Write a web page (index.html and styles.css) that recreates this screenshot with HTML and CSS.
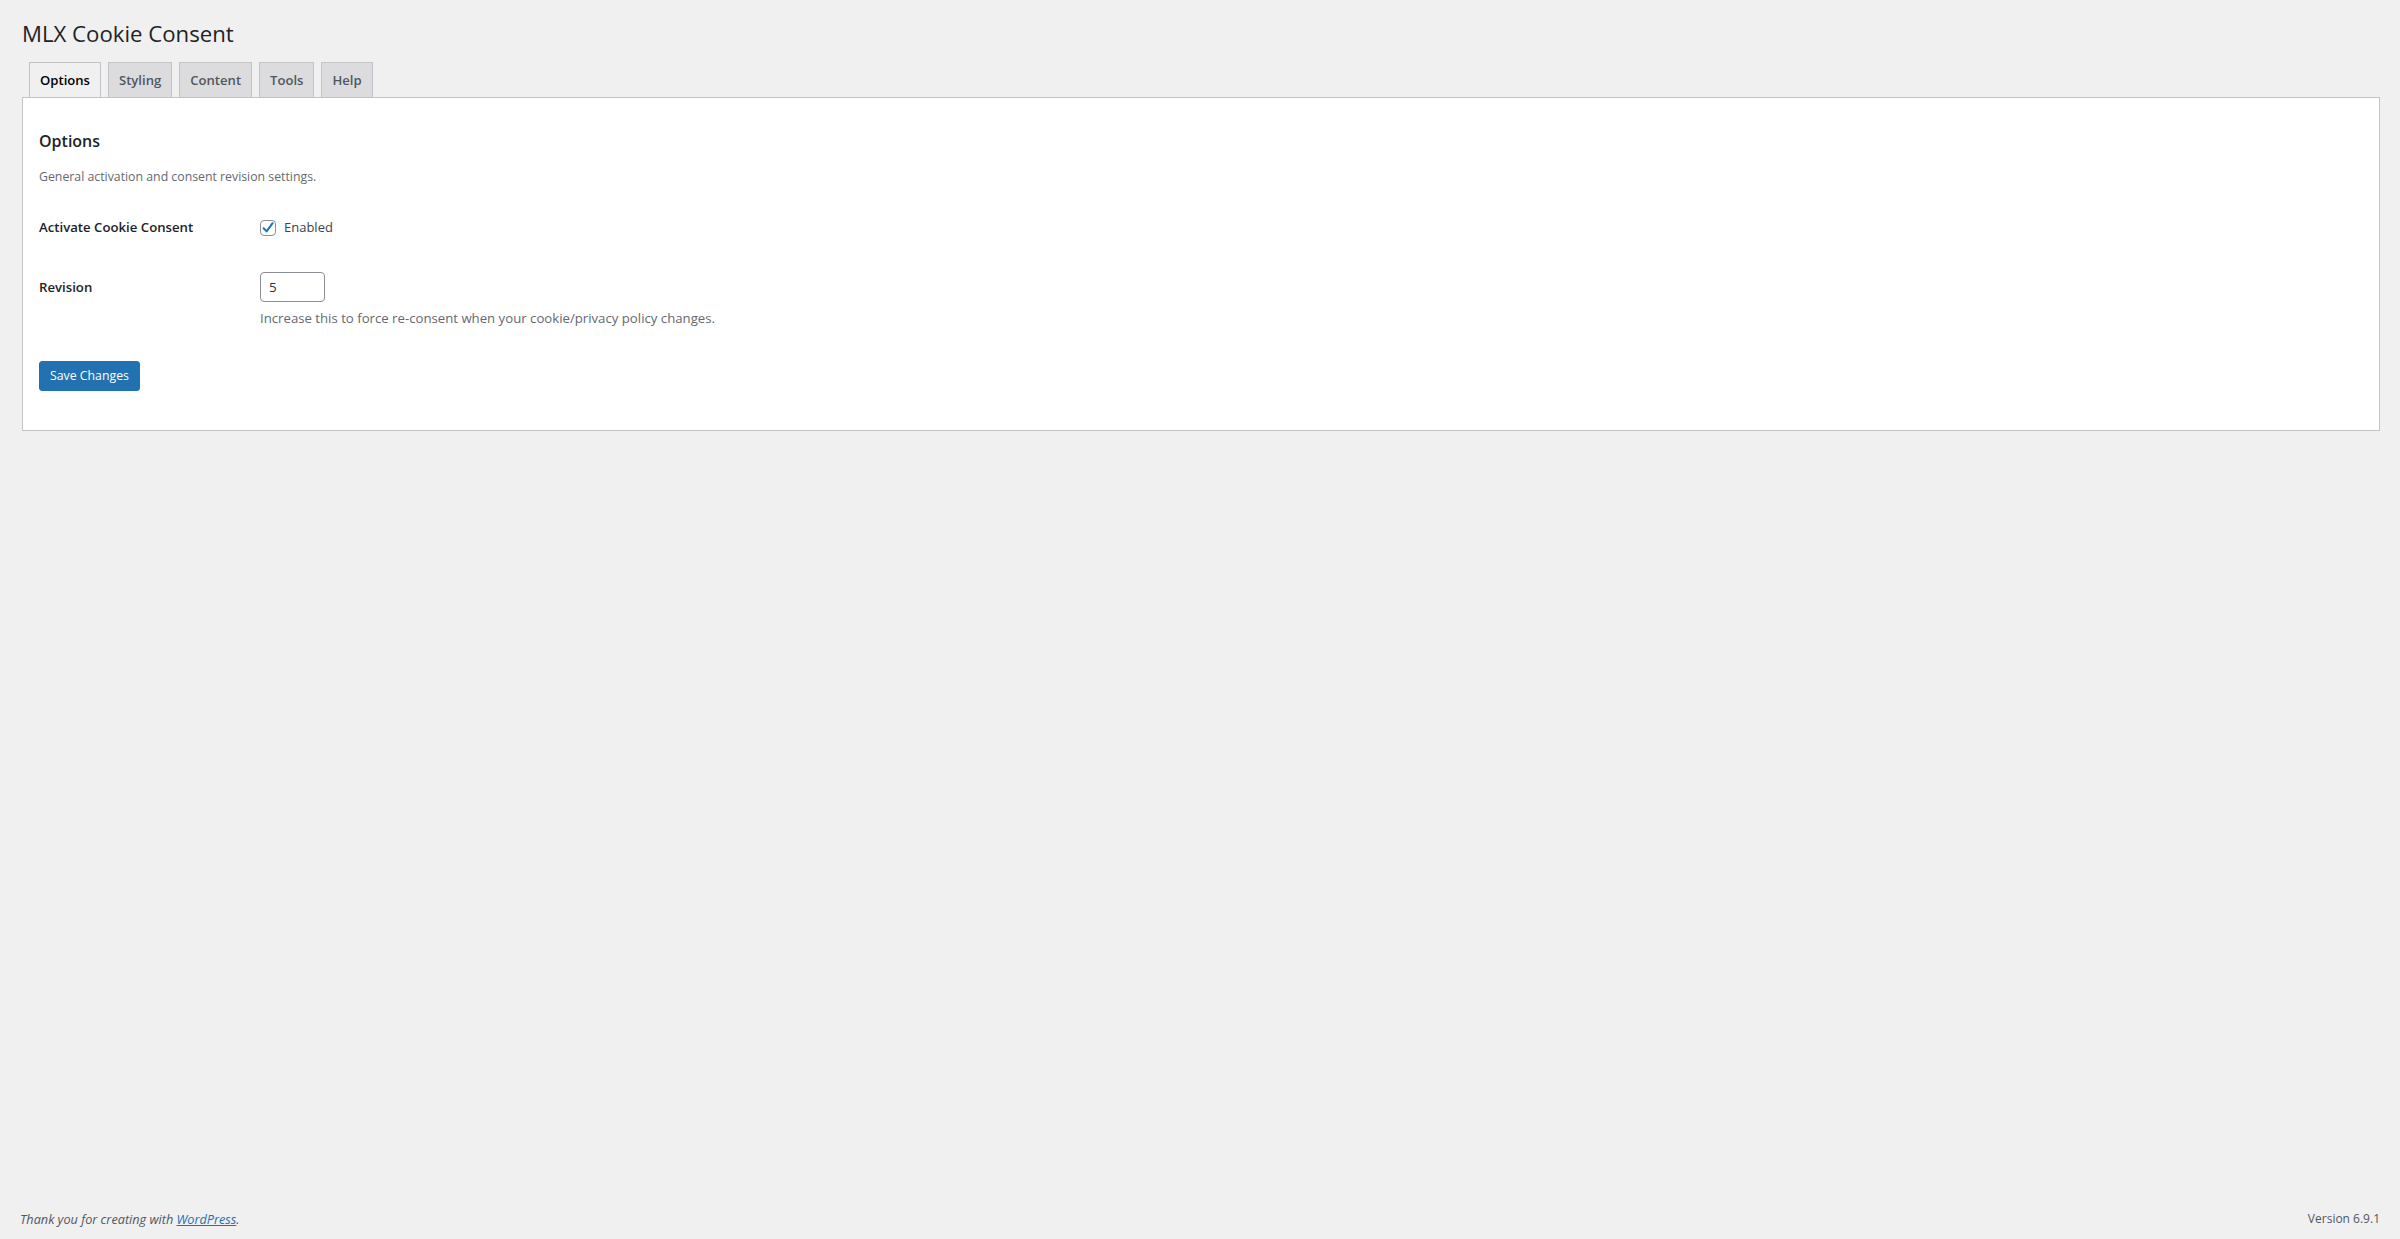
FILE: index.html
```html
<!DOCTYPE html>
<html lang="en">

<head>
  <meta charset="UTF-8">
  <meta name="viewport" content="width=device-width, initial-scale=1.0">
  <title>MLX Cookie Consent</title>
  <link rel="stylesheet" href="styles.css">
</head>

<body>
  <div class="page">
    <div class="wrap">
      <h1 class="page-ttl">MLX Cookie Consent</h1>

      <!-- tabs -->
      <nav class="nav-tabs">
        <a href="#" class="nav-tab is-active">Options</a>
        <a href="#" class="nav-tab">Styling</a>
        <a href="#" class="nav-tab">Content</a>
        <a href="#" class="nav-tab">Tools</a>
        <a href="#" class="nav-tab">Help</a>
      </nav>

      <!-- panel -->
      <form class="panel">
        <h2 class="panel-ttl">Options</h2>
        <p class="panel-desc">General activation and consent revision settings.</p>

        <div class="form-row form-row-check">
          <div class="form-label">Activate Cookie Consent</div>
          <label class="check">
            <span class="check-box">
              <svg width="16" height="16" viewBox="0 0 16 16">
                <path d="M3.6 8.2 L6.6 11.4 L12.6 3.2" fill="none" stroke="#2271b1" stroke-width="2" stroke-linecap="round" stroke-linejoin="round" />
              </svg>
            </span>
            Enabled
          </label>
        </div>

        <div class="form-row form-row-input">
          <div class="form-label">Revision</div>
          <div class="form-field">
            <input type="text" class="num-input" value="5">
            <p class="field-desc">Increase this to force re-consent when your cookie/privacy policy changes.</p>
          </div>
        </div>

        <div class="btn-wrap">
          <button type="button" class="btn-primary">Save Changes</button>
        </div>
      </form>
    </div>

    <footer class="footer">
      <p class="footer-thanks">Thank you for creating with <a href="#">WordPress</a>.</p>
      <p class="footer-ver">Version 6.9.1</p>
    </footer>
  </div>
</body>

</html>
```

FILE: styles.css
```css
html {
  font-size: 13px;
}

body {
  margin: 0;
  background: #f0f0f1;
  color: #3c434a;
  font-family: "Open Sans", "Noto Sans", sans-serif;
  font-size: 13px;
  line-height: 1.4;
}

.page {
  display: flex;
  flex-direction: column;
  min-height: 100vh;
}

.wrap {
  flex: 1;
  margin: 10px 20px 0 22px;
}

.page-ttl {
  margin: 0;
  padding: 9px 0 4px;
  font-size: 22.2px;
  font-weight: 400;
  line-height: 30px;
  color: #1d2327;
}

.nav-tabs {
  display: flex;
  gap: 7px;
  padding: 9px 0 0 7px;
}

.nav-tab {
  padding: 5px 10px;
  font-size: 13.1px;
  font-weight: 600;
  line-height: 24px;
  color: #50575e;
  text-decoration: none;
  background: #dcdcde;
  border: 1px solid #c3c4c7;
  border-bottom: none;
}

.nav-tab.is-active {
  color: #000;
  background: #f0f0f1;
}

.panel {
  display: block;
  padding: 31px 16px 39px;
  background: #fff;
  border: 1px solid #c3c4c7;
}

.panel-ttl {
  margin: 0;
  font-size: 16px;
  font-weight: 600;
  line-height: 24px;
  color: #1d2327;
}

.panel-desc {
  margin: 14px 0 0;
  font-size: 12.3px;
  line-height: 20px;
  color: #646970;
}

.form-row {
  display: flex;
  align-items: flex-start;
}

.form-row-check {
  margin-top: 30px;
}

.form-row-input {
  margin-top: 35px;
}

.form-label {
  width: 221px;
  flex-shrink: 0;
  font-size: 13.2px;
  font-weight: 600;
  line-height: 20px;
  color: #1d2327;
}

.form-row-input .form-label {
  line-height: 30px;
}

.check {
  display: flex;
  align-items: center;
  gap: 8px;
  font-size: 13px;
  line-height: 20px;
  color: #3c434a;
}

.check-box {
  display: block;
  width: 14px;
  height: 14px;
  margin-top: 2px;
  position: relative;
  border: 1px solid #8c8f94;
  border-radius: 4px;
  background: #fff;
}

.check-box svg {
  position: absolute;
  top: -1px;
  left: -1px;
}

.num-input {
  display: block;
  box-sizing: border-box;
  width: 65px;
  height: 30px;
  margin: 0;
  padding: 0 8px;
  font-family: inherit;
  font-size: 13.5px;
  color: #2c3338;
  background: #fff;
  border: 1px solid #8c8f94;
  border-radius: 4px;
}

.field-desc {
  margin: 6px 0 0;
  font-size: 13.2px;
  line-height: 20px;
  color: #646970;
}

.btn-wrap {
  margin-top: 33px;
}

.btn-primary {
  display: inline-block;
  box-sizing: border-box;
  height: 30px;
  padding: 0 10px;
  font-family: inherit;
  font-size: 12.3px;
  line-height: 28px;
  color: #fff;
  background: #2271b1;
  border: 1px solid #2271b1;
  border-radius: 3px;
  cursor: pointer;
}

.footer {
  display: flex;
  justify-content: space-between;
  padding: 10px 20px;
  line-height: 20px;
  color: #50575e;
}

.footer p {
  margin: 0;
}

.footer-thanks {
  font-size: 12.7px;
  font-style: italic;
}

.footer-thanks a {
  color: #2271b1;
}

.footer-ver {
  font-size: 12px;
}
```
